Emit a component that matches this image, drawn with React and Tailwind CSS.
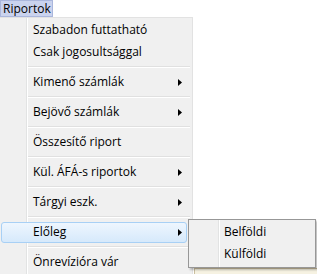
import React from "react";

const items = [
  { label: "Szabadon futtatható" },
  { label: "Csak jogosultsággal", sep: true },
  { label: "Kimenő számlák", sub: true, sep: true },
  { label: "Bejövő számlák", sub: true, sep: true },
  { label: "Összesítő riport", sep: true },
  { label: "Kül. ÁFÁ-s riportok", sub: true, sep: true },
  { label: "Tárgyi eszk.", sub: true, sep: true },
  { label: "Előleg", sub: true, sep: true, hot: true },
  { label: "Önrevízióra vár" },
];

function Arrow() {
  return (
    <svg width="4" height="7" viewBox="0 0 4 7" className="shrink-0">
      <path d="M0 0 L4 3.5 L0 7 Z" fill="#000" />
    </svg>
  );
}

function Separator() {
  return (
    <div className="h-[8px] flex flex-col justify-center pl-[28px] pr-[2px]">
      <div className="h-px bg-[#e0e0e0]" />
      <div className="h-px bg-white" />
    </div>
  );
}

function Item({ label, sub, hot }) {
  return (
    <div className="h-[22px] relative flex items-center">
      {hot && (
        <div className="absolute left-[1px] right-[5px] top-[1px] bottom-0 rounded-[3px] border border-[#a8d0f5] bg-gradient-to-b from-[#eef6fe] to-[#d6e9fb]" />
      )}
      <span className="relative pl-[33px] flex-1">{label}</span>
      {sub && (
        <span className="relative pr-[10px]">
          <Arrow />
        </span>
      )}
    </div>
  );
}

export default function App() {
  return (
    <div
      className="relative w-[317px] h-[274px] bg-white overflow-hidden text-[12px] text-black"
      style={{ fontFamily: '"Open Sans", "Noto Sans", sans-serif' }}
    >
      <div className="h-[17px] flex">
        <div className="w-[53px] h-[17px] bg-[#cad3ee] border border-[#aab6dc] flex items-center pl-[2px] leading-none">
          Riportok
        </div>
      </div>
      <div className="w-[193px] h-[257px] border-t border-r border-[#e2e2e2] pt-[1px] bg-[linear-gradient(to_right,#f0f0f0_26px,#e2e3e3_26px,#e2e3e3_27px,#ffffff_27px,#ffffff_28px,#f0f0f0_28px)]">
        {items.map((it) => (
          <div key={it.label}>
            <Item {...it} />
            {it.sep && <Separator />}
          </div>
        ))}
      </div>

      <div className="absolute left-[194px] top-[268px] right-0 bottom-0 bg-[#f6f2e2] border-t border-l border-[#cbbf9f]" />

      <div className="absolute left-[188px] top-[219px] w-[128px] h-[49px] border border-[#979797] shadow-[2px_2px_2px_rgba(0,0,0,0.25)] py-[1px] bg-[linear-gradient(to_right,#f0f0f0_29px,#e2e3e3_29px,#e2e3e3_30px,#ffffff_30px,#ffffff_31px,#f0f0f0_31px)]">
        <div className="h-[22px] flex items-center pl-[35px]">Belföldi</div>
        <div className="h-[22px] flex items-center pl-[35px]">Külföldi</div>
      </div>
    </div>
  );
}
